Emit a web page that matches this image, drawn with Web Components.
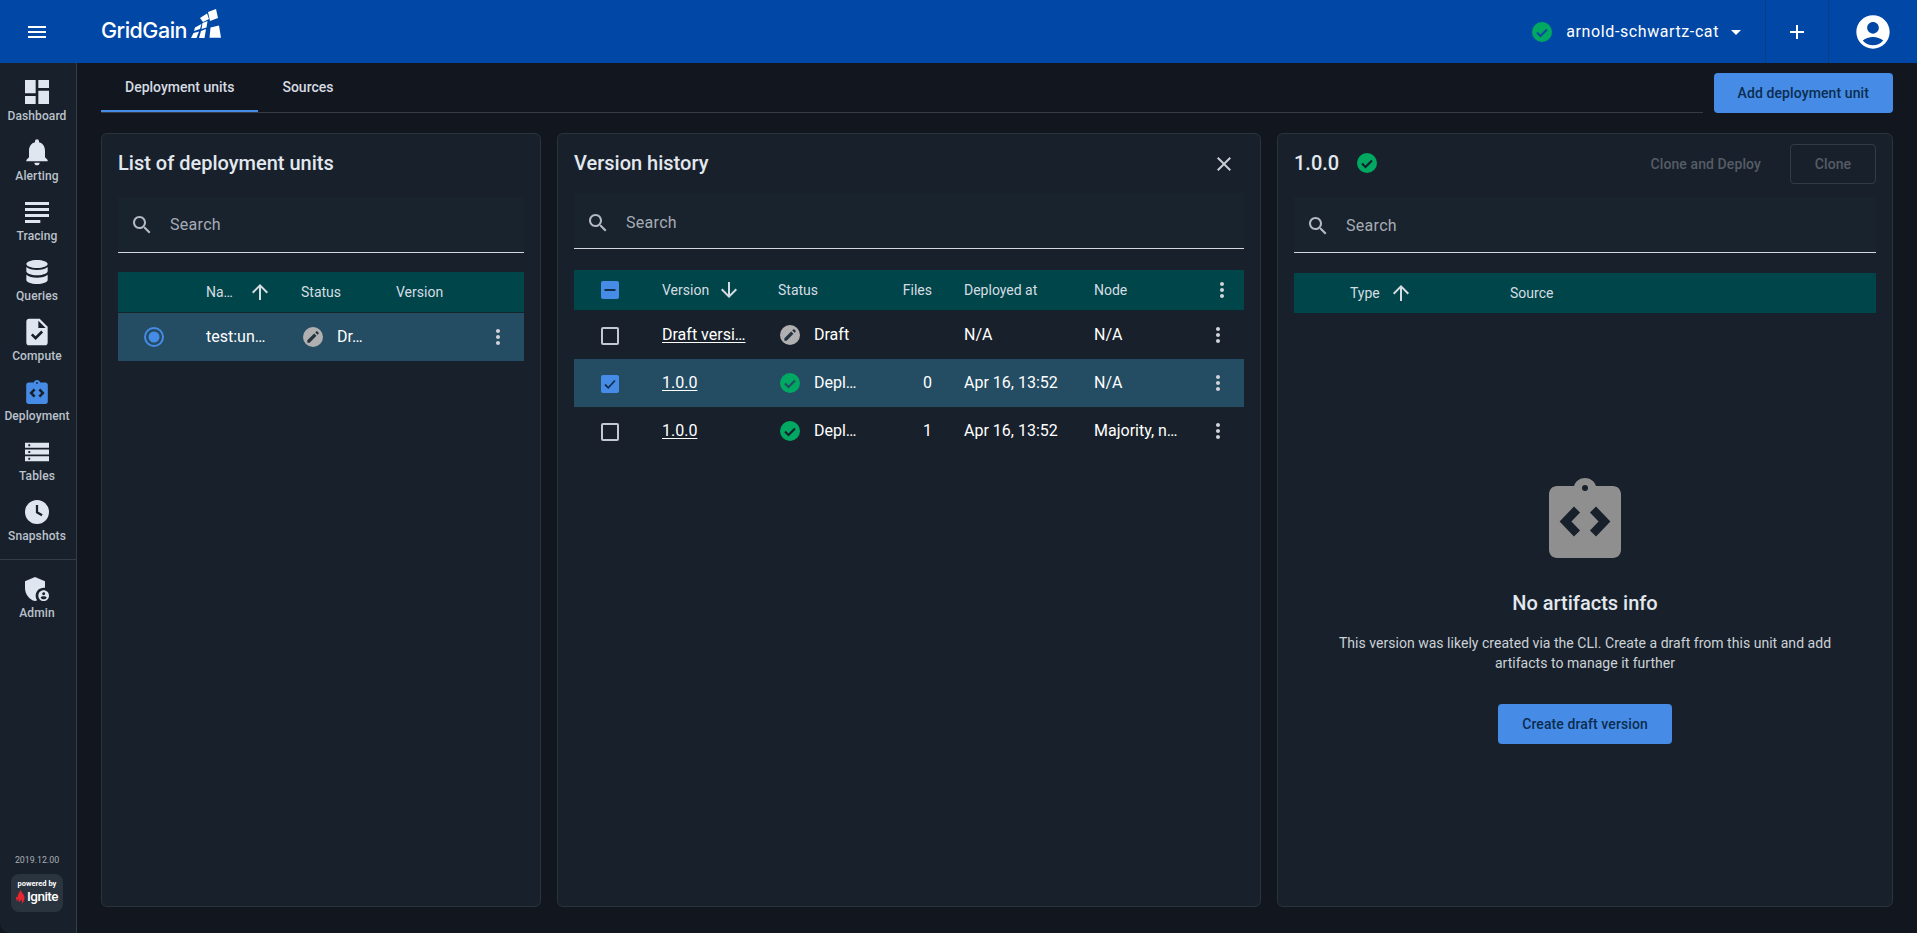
<!DOCTYPE html>
<html lang="en">
<head>
<meta charset="utf-8">
<title>GridGain - Deployment</title>
<style>
  html, body { margin: 0; height: 100%; background: #12161e; overflow: hidden; }
  body { font-family: Roboto, "Liberation Sans", sans-serif; color: #e3e8ef; }
</style>
</head>
<body>

<gg-app>
  <gg-topbar slot="top"></gg-topbar>
  <gg-sidebar slot="side"></gg-sidebar>

  <gg-subheader>
    <gg-tab active>Deployment units</gg-tab>
    <gg-tab>Sources</gg-tab>
    <gg-button slot="action">Add deployment unit</gg-button>
  </gg-subheader>

  <gg-panels>
    <!-- List of units -->
    <gg-panel gap="13">
      <gg-title slot="header">List of deployment units</gg-title>
      <gg-search></gg-search>
      <gg-table cols="88px 95px 95px 90px 1fr" style="margin-top:19px">
        <gg-row head>
          <gg-cell></gg-cell>
          <gg-cell>Na…<gg-icon name="up" size="24" style="margin-left:15px"></gg-icon></gg-cell>
          <gg-cell>Status</gg-cell>
          <gg-cell>Version</gg-cell>
          <gg-cell></gg-cell>
        </gg-row>
        <gg-row selected>
          <gg-cell center><gg-icon name="radio" size="24" style="color:#468ce6;margin-left:-16px"></gg-icon></gg-cell>
          <gg-cell>test:un…</gg-cell>
          <gg-cell><gg-status kind="draft">Dr…</gg-status></gg-cell>
          <gg-cell></gg-cell>
          <gg-cell><gg-icon name="dots" size="24"></gg-icon></gg-cell>
        </gg-row>
      </gg-table>
    </gg-panel>

    <!-- Versions of the selected unit -->
    <gg-panel gap="9">
      <gg-title slot="header">Version history</gg-title>
      <gg-icon slot="tools" name="close" size="24" style="color:#c9ced6;margin-right:8px"></gg-icon>
      <gg-search style="padding-top:5px"></gg-search>
      <gg-table cols="88px 116px 110px 76px 130px 112px 1fr" style="margin-top:21px">
        <gg-row head>
          <gg-cell><gg-check state="mixed" style="margin-top:0"></gg-check></gg-cell>
          <gg-cell>Version<gg-icon name="down" size="24" style="margin-left:8px"></gg-icon></gg-cell>
          <gg-cell>Status</gg-cell>
          <gg-cell right>Files</gg-cell>
          <gg-cell>Deployed at</gg-cell>
          <gg-cell>Node</gg-cell>
          <gg-cell><gg-icon name="dots" size="24" style="margin-left:4px"></gg-icon></gg-cell>
        </gg-row>
        <gg-row>
          <gg-cell><gg-check></gg-check></gg-cell>
          <gg-cell><gg-link>Draft versi…</gg-link></gg-cell>
          <gg-cell><gg-status kind="draft">Draft</gg-status></gg-cell>
          <gg-cell right></gg-cell>
          <gg-cell>N/A</gg-cell>
          <gg-cell>N/A</gg-cell>
          <gg-cell><gg-icon name="dots" size="24"></gg-icon></gg-cell>
        </gg-row>
        <gg-row selected>
          <gg-cell><gg-check state="on"></gg-check></gg-cell>
          <gg-cell><gg-link>1.0.0</gg-link></gg-cell>
          <gg-cell><gg-status kind="ok" style="--mark:#244c63">Depl…</gg-status></gg-cell>
          <gg-cell right>0</gg-cell>
          <gg-cell>Apr 16, 13:52</gg-cell>
          <gg-cell>N/A</gg-cell>
          <gg-cell><gg-icon name="dots" size="24"></gg-icon></gg-cell>
        </gg-row>
        <gg-row>
          <gg-cell><gg-check></gg-check></gg-cell>
          <gg-cell><gg-link>1.0.0</gg-link></gg-cell>
          <gg-cell><gg-status kind="ok">Depl…</gg-status></gg-cell>
          <gg-cell right>1</gg-cell>
          <gg-cell>Apr 16, 13:52</gg-cell>
          <gg-cell>Majority, n…</gg-cell>
          <gg-cell><gg-icon name="dots" size="24"></gg-icon></gg-cell>
        </gg-row>
      </gg-table>
    </gg-panel>

    <!-- Artifacts of the selected version -->
    <gg-panel gap="13">
      <gg-title slot="header">1.0.0<gg-icon name="ok" size="20" style="margin-left:18px;color:#00a862;--mark:#18212b"></gg-icon></gg-title>
      <gg-button slot="tools" variant="text">Clone and Deploy</gg-button>
      <gg-button slot="tools" variant="outline">Clone</gg-button>
      <gg-search style="padding-top:2px"></gg-search>
      <gg-table cols="56px 160px 1fr">
        <gg-row head>
          <gg-cell></gg-cell>
          <gg-cell>Type<gg-icon name="up" size="24" style="margin-left:9px"></gg-icon></gg-cell>
          <gg-cell>Source</gg-cell>
        </gg-row>
      </gg-table>
      <gg-empty>
        <span slot="title">No artifacts info</span>
        This version was likely created via the CLI. Create a draft from this unit and add artifacts to manage it further
        <gg-button slot="action" wide>Create draft version</gg-button>
      </gg-empty>
    </gg-panel>
  </gg-panels>
</gg-app>

<script>
// Material style icons, drawn in a 24 box unless they say otherwise
const ICONS = {
  menu: '<path d="M3 18h18v-2H3v2zm0-5h18v-2H3v2zm0-7v2h18V6H3z"/>',
  plus: '<path d="M19 13h-6v6h-2v-6H5v-2h6V5h2v6h6v2z"/>',
  caret: '<path d="M7 10l5 5 5-5z"/>',
  account: '<path d="M12 2C6.48 2 2 6.48 2 12s4.48 10 10 10 10-4.48 10-10S17.52 2 12 2zm0 4c1.93 0 3.5 1.57 3.5 3.5S13.93 13 12 13s-3.5-1.57-3.5-3.5S10.07 6 12 6zm0 14c-2.03 0-4.43-.82-6.14-2.88C7.55 15.8 9.68 15 12 15s4.45.8 6.14 2.12C16.43 19.18 14.03 20 12 20z"/>',
  search: '<path d="M15.5 14h-.79l-.28-.27C15.41 12.59 16 11.11 16 9.5 16 5.91 13.09 3 9.5 3S3 5.91 3 9.5 5.91 16 9.5 16c1.61 0 3.09-.59 4.23-1.57l.27.28v.79l5 4.99L20.49 19l-4.99-5zm-6 0C7.01 14 5 11.99 5 9.5S7.01 5 9.5 5 14 7.01 14 9.5 11.99 14 9.5 14z"/>',
  up: '<path d="M4 12l1.41 1.41L11 7.83V20h2V7.83l5.58 5.59L20 12l-8-8-8 8z"/>',
  down: '<path d="M20 12l-1.41-1.41L13 16.17V4h-2v12.17l-5.58-5.59L4 12l8 8 8-8z"/>',
  dots: '<path fill="#d0d4da" d="M12 8c1.1 0 2-.9 2-2s-.9-2-2-2-2 .9-2 2 .9 2 2 2zm0 2c-1.1 0-2 .9-2 2s.9 2 2 2 2-.9 2-2-.9-2-2-2zm0 6c-1.1 0-2 .9-2 2s.9 2 2 2 2-.9 2-2-.9-2-2-2z"/>',
  close: '<path d="M19 6.41L17.59 5 12 10.59 6.41 5 5 6.41 10.59 12 5 17.59 6.41 19 12 13.41 17.59 19 19 17.59 13.41 12z"/>',
  radio: '<circle cx="12" cy="12" r="9" fill="none" stroke="currentColor" stroke-width="2"/><circle cx="12" cy="12" r="5.5"/>',
  ok: '<circle cx="12" cy="12" r="12"/><path d="M6 12.5l4.2 4.2L18 9" style="fill:none;stroke:var(--mark,#18212b);stroke-width:2.6"/>',
  draft: '<circle cx="12" cy="12" r="12" fill="#b0b0b0"/><path transform="translate(12 12) scale(1.3) translate(-11.7 -12.300)" fill="#24333f" d="M6.500 15.400v2.100h2.100l6.300-6.300-2.100-2.100-6.300 6.300zm10.400-6.200c.2-.2.2-.6 0-.8l-1.300-1.300c-.2-.2-.6-.2-.8 0l-1 1 2.100 2.100 1-1z"/>',
  dashboard: '<path d="M3 13h8V3H3v10zm0 8h8v-6H3v6zm10 0h8V11h-8v10zm0-18v6h8V3h-8z"/>',
  bell: '<path d="M12 22c1.1 0 2-.9 2-2h-4c0 1.1.89 2 2 2zm6-6v-5c0-3.07-1.64-5.64-4.5-6.32V4c0-.83-.67-1.5-1.5-1.5s-1.5.67-1.5 1.5v.68C7.63 5.36 6 7.92 6 11v5l-2 2v1h16v-1l-2-2z"/>',
  tracing: '<path d="M3 4.500h18v2.200H3zM3 9h18v2.200H3zM3 13.500h18v2.200H3zM3 18h11.500v2.200H3z"/>',
  database: '<path d="M12 3c4.400 0 8 1.300 8 3s-3.600 3-8 3-8-1.300-8-3 3.600-3 8-3zM4 8.200C5.400 9.700 8.700 10.500 12 10.500s6.600-.8 8-2.300v3.300c0 1.700-3.600 3-8 3s-8-1.300-8-3V8.200zM4 14c1.400 1.500 4.700 2.300 8 2.300s6.600-.8 8-2.300v4c0 1.700-3.600 3-8 3s-8-1.300-8-3v-4z"/>',
  task: '<path d="M14 2H6c-1.100 0-1.990.9-1.990 2L4 20c0 1.100.89 2 1.990 2H18c1.100 0 2-.9 2-2V8l-6-6zm-3.060 16L7.400 14.460l1.410-1.410 2.120 2.120 4.240-4.240 1.410 1.410L10.940 18zM13 9V3.500L18.500 9H13z"/>',
  tables: '<path fill-rule="evenodd" d="M3 5h18v3.800H3zM5.500 6.200v1.400h1.400V6.200zM3 10.100h18v3.800H3zM5.500 11.300v1.400h1.400v-1.400zM3 15.200h18V19H3zM5.500 16.400v1.400h1.400v-1.400z"/>',
  clock: '<circle cx="12" cy="12" r="9"/><path d="M12 6.800v5.400l3.800 2.300" fill="none" stroke="#18212b" stroke-width="1.700"/>',
  admin: '<path d="M17 11c.34 0 .67.04 1 .09V6.270L10.500 3 3 6.270v4.910c0 4.540 3.200 8.790 7.500 9.820.55-.13 1.080-.32 1.600-.55-.69-.98-1.100-2.170-1.100-3.450 0-3.310 2.690-6 6-6z"/><path d="M17 13c-2.210 0-4 1.790-4 4s1.790 4 4 4 4-1.790 4-4-1.790-4-4-4zm0 1.380c.62 0 1.120.51 1.120 1.120s-.51 1.120-1.120 1.120-1.120-.51-1.120-1.120.5-1.120 1.120-1.120zm0 5.370c-.93 0-1.740-.46-2.240-1.170.05-.72 1.510-1.080 2.240-1.080s2.190.36 2.240 1.080c-.5.71-1.310 1.170-2.240 1.170z"/>',
  // clipboard with a code mark, shared by the nav item and the empty state
  clipboard: '<path fill-rule="evenodd" d="M36 0c5 0 9.500 3 11 8h17c4.400 0 8 3.600 8 8v56c0 4.400-3.600 8-8 8H8c-4.400 0-8-3.600-8-8V16c0-4.400 3.600-8 8-8h17c1.500-5 6-8 11-8zm0 7a3 3 0 1 0 0 6 3 3 0 0 0 0-6z"/><path d="M28 31.500L16.500 43.500 28 55.500M44 31.500L55.500 43.500 44 55.500" fill="none" stroke="#18212b" stroke-width="8.500"/>'
};
const BOXES = { clipboard: '0 0 72 80' };

// little helper so each element only has to say its styles and markup
class GgElement extends HTMLElement {
  constructor() {
    super();
    this.attachShadow({ mode: 'open' });
    this.shadowRoot.innerHTML = `<style>${this.constructor.css}</style>${this.constructor.html || '<slot></slot>'}`;
  }
}

class GgIcon extends GgElement {
  static css = `:host { display: inline-flex; flex: none; } svg { display: block; fill: currentColor; }`;
  static html = `<svg></svg>`;
  connectedCallback() {
    const name = this.getAttribute('name');
    const size = this.getAttribute('size') || 24;
    const svg = this.shadowRoot.querySelector('svg');
    svg.setAttribute('viewBox', BOXES[name] || '0 0 24 24');
    svg.setAttribute('width', this.getAttribute('width') || size);
    svg.setAttribute('height', this.getAttribute('height') || size);
    svg.innerHTML = ICONS[name];
  }
}

class GgApp extends GgElement {
  static css = `
    :host { display: grid; grid-template: 63px 1fr / 77px 1fr; height: 100vh; }
    ::slotted([slot="top"]) { grid-column: 1 / 3; }
    main { padding: 0 24px 26px; display: flex; flex-direction: column; min-height: 0; }
  `;
  static html = `<slot name="top"></slot><slot name="side"></slot><main><slot></slot></main>`;
}

class GgTopbar extends GgElement {
  static css = `
    :host { display: flex; align-items: stretch; background: #0047a6; color: #fff; }
    .burger { display: flex; align-items: center; margin-left: 25px; }
    .logo { display: flex; align-items: flex-start; margin-left: 52px; }
    .word { font: 500 21.500px/1 Inter, sans-serif; letter-spacing: -.5px; margin-top: 20px; width: 89px; }
    .sail { margin-top: 9px; }
    .cluster { margin-left: auto; display: flex; align-items: center; padding-right: 17px; }
    .name { font: 400 16px/24px Roboto, sans-serif; letter-spacing: .6px; margin: 0 5px 0 14px; }
    .cell { display: flex; align-items: center; justify-content: center; width: 62px; border-left: 1px solid #0b3c86; }
    .cell.user { width: 88px; }
  `;
  static html = `
    <div class="burger"><gg-icon name="menu"></gg-icon></div>
    <div class="logo">
      <span class="word">GridGain</span>
      <svg class="sail" width="32" height="30" viewBox="190 9 32 30" fill="#fff">
        <polygon points="208,12 216,9 218,18 210,21"/>
        <polygon points="200,18 207,13.500 209,19 203,22"/>
        <polygon points="210.500,27.500 219,25.500 221,37.700 209.500,37.700"/>
        <polygon points="195,27.500 201.500,24 200,29 194,31"/>
        <polygon points="193.500,33 199,31.500 196.500,38 191,38"/>
        <polygon points="201,31 206,29 204.500,38 199,38"/>
        <polygon points="202.500,23 207.500,21 206.500,27.500 201.500,29"/>
      </svg>
    </div>
    <div class="cluster">
      <gg-icon name="ok" size="20" style="color:#00a862;--mark:#0b4aa0"></gg-icon>
      <span class="name">arnold-schwartz-cat</span>
      <gg-icon name="caret"></gg-icon>
    </div>
    <div class="cell"><gg-icon name="plus"></gg-icon></div>
    <div class="cell user"><gg-icon name="account" size="40"></gg-icon></div>
  `;
}

class GgNavItem extends GgElement {
  static css = `
    :host { display: flex; flex-direction: column; align-items: center; height: 60px; box-sizing: border-box; padding-top: 4px; color: #e0e6ef; }
    :host([active]) { color: #468ce6; }
    .icon { height: 32px; display: flex; align-items: center; justify-content: center; }
    .label { font: 500 12px/16px Roboto, sans-serif; letter-spacing: .1px; color: #bcc2cb; white-space: nowrap; }
  `;
  static html = `<div class="icon"><slot name="icon"></slot></div><div class="label"><slot></slot></div>`;
}

class GgSidebar extends GgElement {
  static css = `
    :host { display: flex; flex-direction: column; background: #18212b; border-right: 1px solid #363c45; border-bottom-left-radius: 10px; padding: 9px 0 0; box-sizing: border-box; }
    .nav { padding-right: 2px; }
    hr { border: 0; border-top: 1px solid #363c45; margin: 7px 0 9px; width: 100%; }
    .foot { margin-top: auto; padding: 0 2px 21px 0; display: flex; flex-direction: column; align-items: center; }
    .ver { font: 400 8.800px/12px Roboto, sans-serif; color: #a8aeb7; margin-bottom: 8px; }
    .badge { width: 52px; height: 38px; border-radius: 8px; background: #29343f; color: #fff; display: flex; flex-direction: column; align-items: center; padding-top: 5px; box-sizing: border-box; }
    .pow { font: 700 7.500px/9px Roboto, sans-serif; white-space: nowrap; }
    .ign { display: flex; align-items: center; height: 15px; margin-top: 1px; }
    .ign span { font: 500 13.500px/15px Roboto, sans-serif; letter-spacing: -.5px; margin-left: 2px; }
  `;
  static html = `
    <div class="nav">
      <gg-nav-item><gg-icon slot="icon" name="dashboard" size="32"></gg-icon>Dashboard</gg-nav-item>
      <gg-nav-item><gg-icon slot="icon" name="bell" size="32"></gg-icon>Alerting</gg-nav-item>
      <gg-nav-item><gg-icon slot="icon" name="tracing" size="32"></gg-icon>Tracing</gg-nav-item>
      <gg-nav-item><gg-icon slot="icon" name="database" size="32"></gg-icon>Queries</gg-nav-item>
      <gg-nav-item><gg-icon slot="icon" name="task" size="32"></gg-icon>Compute</gg-nav-item>
      <gg-nav-item active><gg-icon slot="icon" name="clipboard" width="22" height="24"></gg-icon>Deployment</gg-nav-item>
      <gg-nav-item><gg-icon slot="icon" name="tables" size="32"></gg-icon>Tables</gg-nav-item>
      <gg-nav-item><gg-icon slot="icon" name="clock" size="32"></gg-icon>Snapshots</gg-nav-item>
    </div>
    <hr>
    <div class="nav">
      <gg-nav-item><gg-icon slot="icon" name="admin" size="32"></gg-icon>Admin</gg-nav-item>
    </div>
    <div class="foot">
      <div class="ver">2019.12.00</div>
      <div class="badge">
        <div class="pow">powered by</div>
        <div class="ign">
          <svg width="9" height="14" viewBox="0 0 9 14"><path fill="#ea2430" d="M4.500 0c.6 2.400 3 3.600 3.800 6.200.7 2.600-.3 5.700-2.800 7.800.8-1.800.7-3.400-.4-4.800-.2 1.200-1 1.800-1.500 2.700C2.500 11 2 9.800 2.300 8.400 1.300 9.200 1.100 10.500 1.400 12 .2 10.400-.4 8.300.3 6.400c.5 .7 1 1 1.500 1.100C1.400 4.800 3.300 2.600 4.500 0z"/></svg>
          <span>Ignite</span>
        </div>
      </div>
    </div>
  `;
}

class GgSubheader extends GgElement {
  static css = `
    :host { display: flex; height: 70px; flex: none; }
    .tabs { flex: 1; display: flex; height: 50px; box-sizing: border-box; border-bottom: 1px solid #363c45; }
    .action { margin: 10px 0 0 11px; }
  `;
  static html = `<div class="tabs"><slot></slot></div><div class="action"><slot name="action"></slot></div>`;
}

class GgTab extends GgElement {
  static css = `
    :host { display: block; height: 47px; padding: 0 24px; font: 500 14px/49px Roboto, sans-serif; color: #d6dbe2; white-space: nowrap; }
    :host([active]) { border-bottom: 2px solid #468ce6; }
  `;
}

class GgButton extends GgElement {
  static css = `
    :host { display: inline-flex; align-items: center; justify-content: center; box-sizing: border-box; height: 40px; padding: 0 24px; border-radius: 4px; background: #468ce6; color: #0b2d50; font: 500 14px/20px Roboto, sans-serif; letter-spacing: .1px; white-space: nowrap; }
    :host([variant="text"]) { background: none; color: #565c66; padding: 0 29px 0 0; }
    :host([variant="outline"]) { background: none; color: #565c66; border: 1px solid #343b44; width: 86px; padding: 0; }
  `;
}

class GgPanels extends GgElement {
  static css = `:host { flex: 1; min-height: 0; display: grid; grid-template-columns: 440px 704px 1fr; gap: 16px; }`;
}

class GgPanel extends GgElement {
  static css = `
    :host { display: flex; flex-direction: column; min-height: 0; box-sizing: border-box; background: #18212b; border: 1px solid #2c323a; border-radius: 6px; padding: 10px 16px 0; }
    header { display: flex; align-items: center; height: 40px; flex: none; }
    .tools { margin-left: auto; display: flex; align-items: center; }
  `;
  static html = `<header><slot name="header"></slot><div class="tools"><slot name="tools"></slot></div></header><div id="gap"></div><slot></slot>`;
  connectedCallback() {
    this.shadowRoot.getElementById('gap').style.height = this.getAttribute('gap') + 'px';
  }
}

class GgTitle extends GgElement {
  static css = `:host { display: flex; align-items: center; margin-top: -2px; font: 500 20px/28px Roboto, sans-serif; color: #e3e8ef; white-space: nowrap; }`;
}

class GgSearch extends GgElement {
  static css = `
    :host { display: flex; align-items: center; height: 56px; flex: none; box-sizing: border-box; background: #19232d; border-bottom: 1px solid #d4d8de; color: #b4bac2; padding-left: 12px; }
    span { margin-left: 16px; font: 400 16px/24px Roboto, sans-serif; letter-spacing: .3px; color: #a6acb5; }
  `;
  static html = `<gg-icon name="search"></gg-icon><span>Search</span>`;
}

class GgTable extends GgElement {
  static css = `:host { display: block; margin-top: 20px; flex: none; }`;
  connectedCallback() { this.style.setProperty('--cols', this.getAttribute('cols')); }
}

class GgRow extends GgElement {
  static css = `
    :host { display: grid; grid-template-columns: var(--cols); align-items: center; height: 48px; font: 400 16px/24px Roboto, sans-serif; color: #fff; }
    :host([head]) { height: 41px; box-sizing: border-box; background: #004549; border-bottom: 1px solid #12232c; font-size: 14px; color: #d5dde3; }
    :host([selected]) { background: #244c63; }
  `;
}

class GgCell extends GgElement {
  static css = `
    :host { display: flex; align-items: center; white-space: nowrap; min-width: 0; }
    :host([center]) { justify-content: center; }
    :host([right]) { justify-content: flex-end; padding-right: 32px; }
  `;
}

class GgLink extends GgElement {
  static css = `:host { text-decoration: underline; text-underline-offset: 2px; }`;
}

class GgStatus extends GgElement {
  static css = `
    :host { display: flex; align-items: center; margin-left: 2px; }
    gg-icon { margin-right: 14px; }
    .ok { color: #00a862; }
  `;
  static html = `<gg-icon size="20"></gg-icon><slot></slot>`;
  connectedCallback() {
    const kind = this.getAttribute('kind');
    const icon = this.shadowRoot.querySelector('gg-icon');
    icon.setAttribute('name', kind);
    icon.className = kind;
    if (icon.isConnected && icon.connectedCallback) icon.connectedCallback();
  }
}

class GgCheck extends GgElement {
  static css = `
    :host { display: block; width: 18px; height: 18px; box-sizing: border-box; margin: 1px 0 0 27px; border: 2px solid #c5c9cf; border-radius: 2px; }
    :host([state]) { background: #468ce6; border-color: #468ce6; }
    svg { display: none; position: absolute; margin: -2px; }
    :host([state="on"]) .on, :host([state="mixed"]) .mixed { display: block; }
  `;
  static html = `
    <svg class="on" width="18" height="18" viewBox="0 0 18 18"><path d="M4 9.500l3.300 3.300L14 5.500" fill="none" stroke="#12304d" stroke-width="1.800"/></svg>
    <svg class="mixed" width="18" height="18" viewBox="0 0 18 18"><path d="M3.500 9h11" fill="none" stroke="#12304d" stroke-width="2"/></svg>
  `;
}

class GgEmpty extends GgElement {
  static css = `
    :host { display: flex; flex-direction: column; align-items: center; padding-top: 164px; text-align: center; }
    .t { font: 500 20px/28px Roboto, sans-serif; color: #e3e8ef; margin-top: 31px; }
    .d { font: 400 14px/20px Roboto, sans-serif; letter-spacing: .03px; color: #ccd1d8; margin-top: 16px; max-width: 520px; }
    .a { margin-top: 31px; }
  `;
  static html = `
    <gg-icon name="clipboard" width="72" height="80" style="color:#8f8f8f"></gg-icon>
    <div class="t"><slot name="title"></slot></div>
    <div class="d"><slot></slot></div>
    <div class="a"><slot name="action"></slot></div>
  `;
}

// icons first, the others use them in their markup
customElements.define('gg-icon', GgIcon);
customElements.define('gg-app', GgApp);
customElements.define('gg-topbar', GgTopbar);
customElements.define('gg-nav-item', GgNavItem);
customElements.define('gg-sidebar', GgSidebar);
customElements.define('gg-subheader', GgSubheader);
customElements.define('gg-tab', GgTab);
customElements.define('gg-button', GgButton);
customElements.define('gg-panels', GgPanels);
customElements.define('gg-panel', GgPanel);
customElements.define('gg-title', GgTitle);
customElements.define('gg-search', GgSearch);
customElements.define('gg-table', GgTable);
customElements.define('gg-row', GgRow);
customElements.define('gg-cell', GgCell);
customElements.define('gg-link', GgLink);
customElements.define('gg-status', GgStatus);
customElements.define('gg-check', GgCheck);
customElements.define('gg-empty', GgEmpty);
</script>
</body>
</html>
